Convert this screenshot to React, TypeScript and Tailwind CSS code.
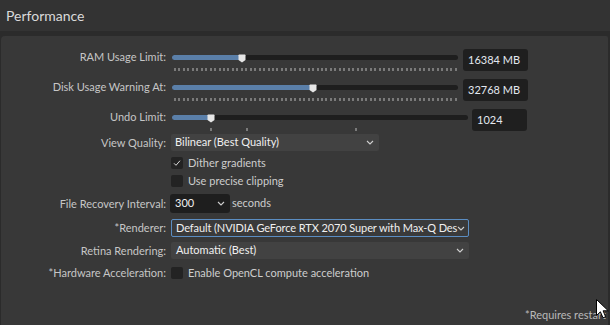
import React from "react";

const FONT = "font-['Lato',sans-serif]";

function Chevron() {
  return (
    <svg width="8" height="5" viewBox="0 0 8 5" className="shrink-0">
      <path d="M1 1l3 3 3-3" fill="none" stroke="#cfcfcf" strokeWidth="1.1" />
    </svg>
  );
}

function Label({ children }: { children: React.ReactNode }) {
  return (
    <div className="w-[165px] shrink-0 text-right text-[11px] leading-[16px] text-[#c6c6c6] whitespace-nowrap">
      {children}
    </div>
  );
}

function Thumb({ left }: { left: number }) {
  return (
    <svg
      width="8"
      height="9"
      viewBox="0 0 8 9"
      className="absolute top-[-1px]"
      style={{ left: left - 4 }}
    >
      <path d="M0.5 1.2Q0.5 0.5 1.2 0.5H6.8Q7.5 0.5 7.5 1.2V6L4 8.5L0.5 6Z" fill="#e6e6e6" />
    </svg>
  );
}

interface SliderProps {
  label: string;
  thumb: number;
  width: number;
  value: string;
  boxWidth: number;
  gap: string;
  ticks: "dense" | "sparse";
}

function SliderRow({ label, thumb, width, value, boxWidth, gap, ticks }: SliderProps) {
  return (
    <div className="flex items-start h-[22px]">
      <Label>{label}</Label>
      <div className="ml-[6px] shrink-0" style={{ width }}>
        <div className="relative mt-[6px] h-[5px] rounded-full bg-[#1e1e1e]">
          <div className="absolute left-0 top-0 h-[5px] rounded-full bg-[#5a7fa9]" style={{ width: thumb }} />
          <Thumb left={thumb} />
        </div>
        {ticks === "dense" ? (
          <div className="mt-[8px] ml-[2px] w-[283px] flex justify-between">
            {Array.from({ length: 64 }).map((_, i) => (
              <div key={i} className="w-[2px] h-[3px] bg-[#7a7a7a]" />
            ))}
          </div>
        ) : (
          <div className="mt-[8px] flex">
            <div className="ml-[38px] w-[2px] h-[3px] bg-[#7a7a7a]" />
            <div className="ml-[34px] w-[2px] h-[3px] bg-[#7a7a7a]" />
            <div className="ml-[107px] w-[2px] h-[3px] bg-[#7a7a7a]" />
          </div>
        )}
      </div>
      <div
        className={`${gap} h-[22px] shrink-0 rounded-[3px] bg-[#1f1f1f] pl-[5px] text-[11px] leading-[22px] text-[#e3e8ef]`}
        style={{ width: boxWidth }}
      >
        {value}
      </div>
    </div>
  );
}

function Check({ checked, children }: { checked?: boolean; children: React.ReactNode }) {
  return (
    <div className="flex items-center h-[12px] ml-[170px]">
      <div className="w-[12px] h-[12px] rounded-[2px] bg-[#232323] flex items-center justify-center">
        {checked && (
          <svg width="12" height="12" viewBox="0 0 12 12">
            <path d="M3 6.3l2 2 4-4.6" fill="none" stroke="#d8d8d8" strokeWidth="1" />
          </svg>
        )}
      </div>
      <span className="ml-[5px] text-[11px] leading-[16px] text-[#cdcdcd] whitespace-nowrap">{children}</span>
    </div>
  );
}

export default function App() {
  return (
    <div className={`${FONT} relative w-[610px] h-[325px] overflow-hidden bg-[#2b2b2b] flex flex-col`}>
      <div className="h-[31px] shrink-0 bg-[#333333] flex items-center pl-[6px] text-[14px] text-[#dadada]">
        Performance
      </div>
      <div className="mt-[5px] ml-[1px] mr-[2px] flex-1 rounded-tl-[4px] rounded-tr-[2px] bg-[#383838] pt-[13px] flex flex-col">
        <SliderRow label="RAM Usage Limit:" thumb={70} width={286} value="16384 MB" boxWidth={65} gap="ml-[5px]" ticks="dense" />
        <div className="mt-[8px]">
          <SliderRow label="Disk Usage Warning At:" thumb={141} width={286} value="32768 MB" boxWidth={65} gap="ml-[5px]" ticks="dense" />
        </div>
        <div className="mt-[8px]">
          <SliderRow label="Undo Limit:" thumb={39} width={296} value="1024" boxWidth={55} gap="ml-[4px]" ticks="sparse" />
        </div>

        <div className="mt-[3px] flex items-center h-[17px]">
          <Label>View Quality:</Label>
          <div className="ml-[5px] w-[208px] h-[17px] rounded-[2px] bg-[#424242] flex items-center justify-between pl-[4px] pr-[5px]">
            <span className="text-[11px] text-[#f0f0f0] whitespace-nowrap">Bilinear (Best Quality)</span>
            <Chevron />
          </div>
        </div>

        <div className="mt-[6px]">
          <Check checked>Dither gradients</Check>
        </div>
        <div className="mt-[6px]">
          <Check>Use precise clipping</Check>
        </div>

        <div className="mt-[7px] flex items-center h-[19px]">
          <Label>File Recovery Interval:</Label>
          <div className="ml-[4px] w-[60px] h-[19px] rounded-[3px] bg-[#1e1e1e] flex items-center justify-between pl-[5px] pr-[5px]">
            <span className="text-[11px] text-[#f0f0f0]">300</span>
            <Chevron />
          </div>
          <span className="ml-[2px] text-[11px] text-[#cdcdcd]">seconds</span>
        </div>

        <div className="mt-[6px] flex items-center h-[18px]">
          <Label>*Renderer:</Label>
          <div className="ml-[5px] w-[298px] h-[18px] rounded-[2px] border border-[#5b8dc2] bg-[#3a3a3a] flex items-center justify-between pl-[4px] pr-[4px]">
            <span className="text-[11px] tracking-[-0.1px] text-[#f0f0f0] whitespace-nowrap">
              Default (NVIDIA GeForce RTX 2070 Super with Max-Q Des
            </span>
            <Chevron />
          </div>
        </div>

        <div className="mt-[5px] flex items-center h-[17px]">
          <Label>Retina Rendering:</Label>
          <div className="ml-[5px] w-[298px] h-[17px] rounded-[2px] bg-[#424242] flex items-center justify-between pl-[5px] pr-[5px]">
            <span className="text-[11px] text-[#f0f0f0] whitespace-nowrap">Automatic (Best)</span>
            <Chevron />
          </div>
        </div>

        <div className="mt-[8px] flex items-center h-[12px]">
          <Label>*Hardware Acceleration:</Label>
          <div className="ml-[5px] w-[12px] h-[12px] rounded-[2px] bg-[#232323]" />
          <span className="ml-[5px] text-[11px] leading-[16px] text-[#cdcdcd] whitespace-nowrap">
            Enable OpenCL compute acceleration
          </span>
        </div>

        <div className="mt-[28px] ml-[524px] text-[11px] leading-[16px] text-[#b8b8b8] whitespace-nowrap">
          *Requires restart
        </div>
      </div>

      <svg width="13" height="20" viewBox="0 0 13 20" className="absolute left-[596px] top-[299px]">
        <path
          d="M0.5 0.5V16.5L4.4 12.8L7 18.8L9.6 17.7L7.1 11.8H12.3Z"
          fill="#ffffff"
          stroke="#000000"
          strokeWidth="1"
          strokeLinejoin="round"
        />
      </svg>
    </div>
  );
}
